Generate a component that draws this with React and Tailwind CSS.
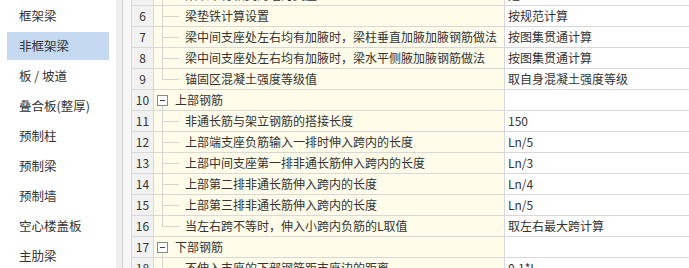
import React from "react";

const menu = ["框架梁", "非框架梁", "板 / 坡道", "叠合板(整厚)", "预制柱", "预制梁", "预制墙", "空心楼盖板", "主肋梁"];

const rows = [
  { no: 5, name: "梁以平行相交的墙为支座", value: "是" },
  { no: 6, name: "梁垫铁计算设置", value: "按规范计算" },
  { no: 7, name: "梁中间支座处左右均有加腋时，梁柱垂直加腋加腋钢筋做法", value: "按图集贯通计算" },
  { no: 8, name: "梁中间支座处左右均有加腋时，梁水平侧腋加腋钢筋做法", value: "按图集贯通计算" },
  { no: 9, name: "锚固区混凝土强度等级值", value: "取自身混凝土强度等级", last: true },
  { no: 10, name: "上部钢筋", group: true },
  { no: 11, name: "非通长筋与架立钢筋的搭接长度", value: "150" },
  { no: 12, name: "上部端支座负筋输入一排时伸入跨内的长度", value: "Ln/5" },
  { no: 13, name: "上部中间支座第一排非通长筋伸入跨内的长度", value: "Ln/3" },
  { no: 14, name: "上部第二排非通长筋伸入跨内的长度", value: "Ln/4" },
  { no: 15, name: "上部第三排非通长筋伸入跨内的长度", value: "Ln/5" },
  { no: 16, name: "当左右跨不等时，伸入小跨内负筋的L取值", value: "取左右最大跨计算", last: true },
  { no: 17, name: "下部钢筋", group: true },
  { no: 18, name: "不伸入支座的下部钢筋距支座边的距离", value: "0.1*L" },
];

const Row = ({ row }) => (
  <div className="flex h-[21px] border-b border-[#d8d8d8]">
    <div className="w-[23px] shrink-0 border-l border-r border-[#d8d8d8] bg-[#f2f2f2] text-center leading-[20px]">
      {row.no}
    </div>
    <div className="relative w-[351px] shrink-0 overflow-hidden whitespace-nowrap border-r border-[#d8d8d8] bg-[#fffdea] leading-[20px]">
      {row.group ? (
        <>
          {/* collapse box */}
          <span className="absolute left-[3px] top-[5px] flex h-[11px] w-[11px] items-center justify-center border border-[#8a8a8a] bg-white">
            <span className="h-px w-[5px] bg-[#444]" />
          </span>
          <span className="absolute left-[8px] top-[16px] h-[5px] w-px bg-[#d4d4d4]" />
          <span className="pl-[21px]">{row.name}</span>
        </>
      ) : (
        <>
          <span className={`absolute left-[8px] top-0 w-px bg-[#d4d4d4] ${row.last ? "h-[10px]" : "h-[21px]"}`} />
          <span className="absolute left-[8px] top-[10px] h-px w-[17px] bg-[#d4d4d4]" />
          <span className="pl-[31px]">{row.name}</span>
        </>
      )}
    </div>
    <div className="flex-1 overflow-hidden whitespace-nowrap bg-white pl-[3px] leading-[20px]">{row.value}</div>
  </div>
);

export default function App() {
  return (
    <div
      className="flex h-[268px] w-[689px] overflow-hidden bg-white text-[12px] text-[#333]"
      style={{ fontFamily: '"Noto Sans CJK SC", "Microsoft YaHei", sans-serif' }}
    >
      {/* left menu */}
      <div className="flex w-[116px] shrink-0 flex-col gap-[2px] bg-white pt-[2px]">
        {menu.map((m, i) => (
          <div
            key={m}
            className={`mx-[7px] flex h-[28px] shrink-0 items-center pl-[12px] text-[12.5px] ${i === 1 ? "bg-[#c5d9f1]" : ""}`}
          >
            {m}
          </div>
        ))}
      </div>
      <div className="w-[6px] shrink-0 bg-[#f0f0f0]" />
      <div className="w-px shrink-0 bg-[#d4d4d4]" />
      <div className="w-[8px] shrink-0 bg-[#f7f7f7]" />

      {/* settings table */}
      <div className="flex-1 overflow-hidden">
        <div className="-mt-[15px]">
          {rows.map((r) => (
            <Row key={r.no} row={r} />
          ))}
        </div>
      </div>
    </div>
  );
}
